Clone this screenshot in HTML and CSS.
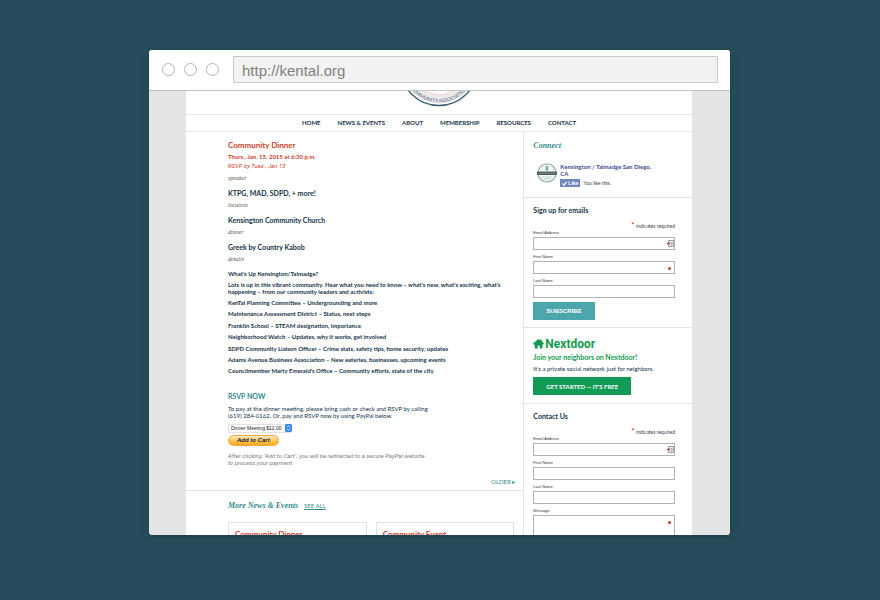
FILE: index.html
```html
<!DOCTYPE html>
<html lang="en">
<head>
<meta charset="utf-8">
<title>Kensington Talmadge Community Association</title>
<link rel="stylesheet" href="styles.css">
</head>
<body>
<div class="window">
  <header class="toolbar">
    <span class="dot"></span><span class="dot"></span><span class="dot"></span>
    <input class="address" type="text" aria-label="Address" value="http://kental.org">
  </header>
  <div class="viewport">
    <div class="page">
      <div class="masthead">
        <svg class="seal" width="80" height="16" viewBox="0 24 80 16" role="img" aria-label="Community Association seal">
          <circle cx="40" cy="0" r="38.500" fill="#fff" stroke="#3a6070" stroke-width="1.400"/>
          <circle cx="40" cy="0" r="32" fill="none" stroke="#ece8ea" stroke-width="9"/>
          <circle cx="40" cy="0" r="27.500" fill="none" stroke="#f0d2d2" stroke-width="1"/>
          <path id="arc" d="M4.500 0A35.500 35.500 0 0 0 75.500 0" fill="none"/>
          <text class="seal-text"><textPath href="#arc" startOffset="50%" text-anchor="middle">COMMUNITY ASSOCIATION</textPath></text>
        </svg>
      </div>
      <nav class="nav">
        <a href="#">HOME</a><a href="#">NEWS &amp; EVENTS</a><a href="#">ABOUT</a><a href="#">MEMBERSHIP</a><a href="#">RESOURCES</a><a href="#">CONTACT</a>
      </nav>
      <div class="columns">
        <main class="main">
          <article class="event">
            <h1>Community Dinner</h1>
            <p class="when">Thurs., Jan. 15, 2015 at 6:30 p.m.</p>
            <p class="by">RSVP by Tues., Jan 13</p>
            <dl class="facts">
              <dt>speaker</dt><dd>KTPG, MAD, SDPD, + more!</dd>
              <dt>location</dt><dd>Kensington Community Church</dd>
              <dt>dinner</dt><dd>Greek by Country Kabob</dd>
              <dt>details</dt>
            </dl>
            <p class="lead">What's Up Kensington/Talmadge?</p>
            <p class="lead">Lots is up in this vibrant community. Hear what you need to know – what's new, what's exciting, what's happening – from our community leaders and activists:</p>
            <ul class="topics">
              <li>KenTal Planning Committee – Undergrounding and more</li>
              <li>Maintenance Assessment District – Status, next steps</li>
              <li>Franklin School – STEAM designation, importance</li>
              <li>Neighborhood Watch – Updates, why it works, get involved</li>
              <li>SDPD Community Liaison Officer – Crime stats, safety tips, home security, updates</li>
              <li>Adams Avenue Business Association – New eateries, businesses, upcoming events</li>
              <li>Councilmember Marty Emerald's Office – Community efforts, state of the city</li>
            </ul>
            <h2>RSVP NOW</h2>
            <p class="pay">To pay at the dinner meeting, please bring cash or check and RSVP by calling<br>(619) 284-0162. Or, pay and RSVP now by using PayPal below.</p>
            <form class="order">
              <span class="picker">
                <select aria-label="Meal"><option>Dinner Meeting $12.00</option></select>
                <svg width="7" height="8" viewBox="0 0 7 8" aria-hidden="true"><rect width="7" height="8" rx="1.5" fill="#2f86f0"/><path d="M2 3.2 3.5 1.7 5 3.2M2 4.8 3.5 6.3 5 4.8" fill="none" stroke="#fff" stroke-width=".9"/></svg>
              </span>
              <button class="cart" type="button">Add to Cart</button>
            </form>
            <p class="after">After clicking "Add to Cart", you will be redirected to a secure PayPal website<br>to process your payment.</p>
            <a class="older" href="#">OLDER ▸</a>
          </article>
          <section class="more">
            <div class="more-head"><h2>More News &amp; Events</h2><a href="#">SEE ALL</a></div>
            <div class="cards">
              <article class="card"><h3>Community Dinner</h3></article>
              <article class="card"><h3>Community Event</h3></article>
            </div>
          </section>
        </main>
        <aside class="side">
          <section class="panel connect">
            <h2>Connect</h2>
            <div class="fb">
              <svg width="20" height="20" viewBox="0 0 20 20" aria-hidden="true">
                <circle cx="10" cy="10" r="9" fill="#fff" stroke="#a9bcbc" stroke-width="1.6"/>
                <circle cx="10" cy="10" r="7" fill="none" stroke="#dfe6e4" stroke-width=".8"/>
                <path d="M10 8V3.500M8.500 4.500C9 3 11 3 11.500 4.500M8.500 6.500 10 5.500 11.500 6.500" fill="none" stroke="#3f9a8c" stroke-width="1"/>
                <path d="M0 8.500h20v3.500H0z" fill="#4c5f62"/>
                <path d="M1.500 10.200h17" stroke="#a9b5b5" stroke-width=".8" stroke-dasharray="1 .6"/>
                <path d="M5 14h10M7 15.800h6" stroke="#9cc5be" stroke-width=".7"/>
              </svg>
              <div>
                <a class="fb-name" href="#">Kensington / Talmadge San Diego, CA</a>
                <div class="fb-row">
                  <button class="like" type="button"><svg width="5" height="5" viewBox="0 0 5 5" aria-hidden="true"><path d="M.5 2.500 2 4.200 4.600.8" fill="none" stroke="#fff" stroke-width="1.200"/></svg>Like</button>
                  <span>You like this.</span>
                </div>
              </div>
            </div>
          </section>
          <section class="panel signup">
            <h2>Sign up for emails</h2>
            <p class="required"><b>*</b> indicates required</p>
            <form>
              <label for="s1">Email Address</label>
              <div class="field"><input id="s1" type="email"><svg class="key" width="7" height="7" viewBox="0 0 7 7" aria-hidden="true"><path d="M1.500.5h5v6h-5z" fill="#eee" stroke="#888" stroke-width=".8"/><path d="M0 3.500h3" stroke="#c0392b" stroke-width="1.500"/><path d="M3.500 2.500h1.500v2.500H3.500" fill="none" stroke="#777" stroke-width=".6"/></svg></div>
              <label for="s2">First Name</label>
              <div class="field"><input id="s2" type="text"><i class="star"></i></div>
              <label for="s3">Last Name</label>
              <div class="field"><input id="s3" type="text"></div>
              <button class="btn subscribe" type="button">SUBSCRIBE</button>
            </form>
          </section>
          <section class="panel nextdoor">
            <div class="brand">
              <svg width="11" height="10" viewBox="0 0 11 10" aria-hidden="true"><path d="M5.500 0 7.200 1.300V.6h1.600v2L11 4.400 10.200 5.600H9.400V9.600H6.700V6.800H4.700V9.600H1.800V5.800L.4 5.400 0 4.400Z" fill="#129a50"/></svg>
              <strong>Nextdoor</strong>
            </div>
            <p class="join">Join your neighbors on Nextdoor!</p>
            <p class="private">It's a private social network just for neighbors.</p>
            <button class="btn start" type="button">GET STARTED — IT'S FREE</button>
          </section>
          <section class="panel contact">
            <h2>Contact Us</h2>
            <p class="required"><b>*</b> indicates required</p>
            <form>
              <label for="c1">Email Address</label>
              <div class="field"><input id="c1" type="email"><svg class="key" width="7" height="7" viewBox="0 0 7 7" aria-hidden="true"><path d="M1.500.5h5v6h-5z" fill="#eee" stroke="#888" stroke-width=".8"/><path d="M0 3.500h3" stroke="#c0392b" stroke-width="1.500"/><path d="M3.500 2.500h1.500v2.500H3.500" fill="none" stroke="#777" stroke-width=".6"/></svg></div>
              <label for="c2">First Name</label>
              <div class="field"><input id="c2" type="text"></div>
              <label for="c3">Last Name</label>
              <div class="field"><input id="c3" type="text"></div>
              <label for="c4">Message</label>
              <div class="field"><textarea id="c4"></textarea><i class="star"></i></div>
            </form>
          </section>
        </aside>
      </div>
    </div>
  </div>
</div>
</body>
</html>
```
FILE: styles.css
```css
* { box-sizing: border-box; }
h1, h2, h3, p, dl, dd, ul { margin: 0; padding: 0; }
ul { list-style: none; }
a { color: inherit; text-decoration: none; }
svg { display: block; flex: none; }
button, input, select, textarea { font: inherit; margin: 0; }

body {
  margin: 0;
  height: 100vh;
  padding: 50px 150px 65px 149px;
  display: flex;
  background: #264c5b;
  color: #14344a;
  font: 6px/7px Lato, "Open Sans", sans-serif;
}

.window {
  flex: 1;
  display: flex;
  flex-direction: column;
  overflow: hidden;
  border-radius: 3px;
  background: #e4e4e4;
  box-shadow: 0 2px 8px rgba(0, 0, 0, .15);
}

.toolbar {
  flex: none;
  display: flex;
  align-items: center;
  gap: 9px;
  padding: 6px 12px 7px;
  background: #fff;
  border-bottom: 1px solid #c2c2c2;
}
.dot {
  width: 13px;
  height: 13px;
  border: 1px solid #b4b4b4;
  border-radius: 50%;
}
.dot:first-child { margin-left: 1px; }
.address {
  flex: 1;
  min-width: 0;
  height: 27px;
  margin-left: 5px;
  padding: 2px 8px 0;
  border: 1px solid #c8cccc;
  border-radius: 0;
  background: #f2f2f2;
  color: #7f7f7f;
  font: 15px "Liberation Sans", sans-serif;
}

.viewport { flex: 1; min-height: 0; overflow: hidden; padding: 0 38px 0 37px; }
.page { background: #fff; }
.masthead { display: flex; justify-content: center; height: 23px; }
.seal-text { font: 700 5px Lato, sans-serif; fill: #7d8e99; }

.nav {
  display: flex;
  justify-content: center;
  gap: 17px;
  padding: 4px 0;
  border-top: 1px solid #e6e6e6;
  border-bottom: 1px solid #e6e6e6;
  font-weight: 700;
  line-height: 8px;
}

.columns { display: grid; grid-template-columns: 2fr 1fr; }
.event { padding: 8px 8px 4px 42px; border-bottom: 1px solid #e4e4e4; display: flex; flex-direction: column; }
.event h1 { color: #c8412b; font-size: 8px; line-height: 10px; }
.when { margin-top: 3px; color: #c8412b; font-weight: 700; line-height: 8px; }
.by { margin-top: 1px; color: #c8412b; font-family: Roboto, sans-serif; font-style: italic; line-height: 8px; }
.facts { margin-top: 4px; line-height: 8px; }
.facts dt { margin-bottom: 7px; color: #555; font-family: "Liberation Serif", serif; font-style: italic; }
.facts dd { margin-bottom: 4px; font-size: 7px; font-weight: 700; }
.lead { margin-bottom: 4px; font-weight: 700; }
.topics { margin-top: -2px; font-weight: 700; line-height: 1.9; }
.event h2 { margin-top: 14px; color: #328b90; font-size: 7px; line-height: 10px; }
.pay { margin-top: 4px; }
.order { display: flex; flex-direction: column; align-items: flex-start; gap: 2px; margin-top: 5px; }
.picker { display: flex; align-items: center; height: 9px; border: 1px solid #e2e2e2; border-right: 0; border-radius: 2px; }
.picker select {
  appearance: none;
  height: 7px;
  padding: 0 3px 0 2px;
  border: 0;
  background: transparent;
  color: #222;
  font: 5px/7px "Liberation Sans", sans-serif;
}
.cart {
  height: 11px;
  padding: 0 8px;
  border: 1px solid #f0a53c;
  border-radius: 6px;
  background: linear-gradient(#fff0c8, #ffc55a 50%, #fba820);
  color: #14233f;
  font: italic 700 6px/8px "Liberation Sans", sans-serif;
}
.after { margin-top: 6px; color: #7b7b7b; font-family: Roboto, sans-serif; font-style: italic; }
.older { align-self: flex-end; margin-top: 12px; color: #328b90; line-height: 8px; }

.more { padding: 9px 9px 40px 42px; }
.more-head { display: flex; align-items: baseline; gap: 6px; line-height: 12px; color: #328b90; }
.more-head h2, .panel.connect h2 { color: #328b90; font: italic 700 8px/12px "Liberation Serif", serif; }
.more-head a { text-decoration: underline; }
.cards { display: grid; grid-template-columns: 1fr 1fr; gap: 9px; margin-top: 10px; }
.card { height: 60px; padding: 6px; border: 1px solid #e0e0e0; }
.card h3 { color: #c8412b; font-size: 8px; line-height: 10px; }

.side { border-left: 1px solid #e4e4e4; }
.panel { padding: 7px 17px 8px 9px; border-bottom: 1px solid #e4e4e4; }
.panel h2 { font-size: 7px; line-height: 10px; }
.panel.connect { padding-top: 8px; padding-bottom: 10px; }
.fb { display: flex; gap: 3px; margin-top: 11px; padding-left: 4px; }
.fb-name { display: block; max-width: 100px; color: #3b4a8f; font-weight: 700; }
.fb-row { display: flex; align-items: center; gap: 3px; margin-top: 2px; color: #333; font: 5px/8px "Liberation Sans", sans-serif; }
.like {
  display: flex;
  align-items: center;
  gap: 1px;
  height: 8px;
  padding: 0 2px;
  border: 0;
  background: #6f86c2;
  color: #fff;
  font-weight: 700;
}
.panel.signup { padding-bottom: 7px; }
.required { margin-top: 7px; color: #444; font-size: 5px; line-height: 7px; text-align: right; }
.required b { color: #c8412b; font-size: 8px; }
.panel label { display: block; margin-bottom: 1px; color: #333; font: 4px/6px "Liberation Sans", sans-serif; }
.field { display: flex; position: relative; margin-bottom: 4px; }
.field input, .field textarea {
  flex: 1;
  min-width: 0;
  height: 13px;
  padding: 0 10px 0 3px;
  border: 1px solid #b2b2b2;
  border-radius: 0;
  background: #fff;
}
.field textarea { height: 40px; resize: none; }
.key { position: absolute; right: 1px; top: 3px; }
.star { position: absolute; right: 4px; top: 6px; width: 3px; height: 3px; border-radius: 50%; background: #c8412b; }
.btn { display: block; height: 18px; border: 0; color: #fff; font-weight: 700; }
.subscribe { padding: 0 13px; background: #4aa5ad; font: 700 6px "Liberation Sans", sans-serif; }
.panel.nextdoor { padding-top: 9px; }
.start { margin-top: 4px; padding: 0 13px; background: #129a57; }
.brand { display: flex; align-items: center; gap: 1px; color: #129a50; font: 12px/14px Roboto, sans-serif; }
.join { margin-top: 2px; color: #129a50; font-size: 7px; font-weight: 700; line-height: 8px; }
.private { margin-top: 4px; line-height: 8px; }
```
